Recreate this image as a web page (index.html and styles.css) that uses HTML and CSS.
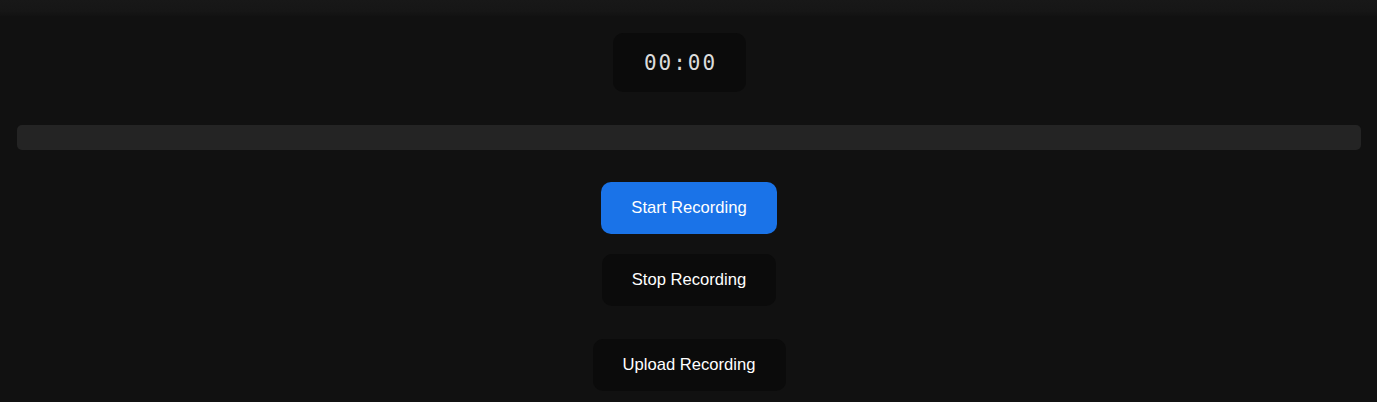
FILE: index.html
```html
<!DOCTYPE html>
<html lang="en">
<head>
<meta charset="utf-8">
<title>Recorder</title>
<link rel="stylesheet" href="styles.css">
</head>
<body>
<div class="topbar"></div>
<main class="recorder">
  <div class="timer-row">
    <div class="timer">00:00</div>
  </div>
  <div class="progress"></div>
  <div class="controls">
    <button class="btn btn-start">Start Recording</button>
    <button class="btn btn-stop">Stop Recording</button>
    <button class="btn btn-upload">Upload Recording</button>
  </div>
</main>
</body>
</html>
```
FILE: styles.css
```css
html, body {
  margin: 0;
  padding: 0;
  background: #111111;
  height: 100%;
  overflow: hidden;
}
body {
  font-family: "Liberation Sans", Arial, sans-serif;
  color: #fff;
}
.topbar {
  height: 16px;
  background: linear-gradient(#181818, #161616 70%, #121212);
}
.recorder {
  padding: 0 16px 0 17px;
  display: flex;
  flex-direction: column;
}
.timer-row {
  display: flex;
  justify-content: center;
  padding-right: 19px;
  margin-top: 17px;
}
.timer {
  width: 133px;
  height: 59px;
  box-sizing: border-box;
  background: #0b0b0b;
  border-radius: 10px;
  display: flex;
  align-items: center;
  justify-content: center;
  font-family: "DejaVu Sans Mono", "Liberation Mono", monospace;
  font-size: 21px;
  letter-spacing: 2px;
  padding-left: 2px;
  color: #dcdcdc;
}
.progress {
  margin-top: 33px;
  height: 25px;
  background: #242424;
  border-radius: 5px;
}
.controls {
  display: flex;
  flex-direction: column;
  align-items: center;
  margin-top: 32px;
}
.btn {
  height: 52px;
  border: none;
  border-radius: 10px;
  font-family: "Liberation Sans", Arial, sans-serif;
  font-size: 16.6px;
  color: #fff;
  padding: 0;
  cursor: pointer;
}
.btn-start {
  width: 176px;
  background: #1a73e8;
}
.btn-stop {
  width: 174px;
  margin-top: 20px;
  background: #0b0b0b;
}
.btn-upload {
  width: 193px;
  margin-top: 33px;
  background: #0b0b0b;
}
```
